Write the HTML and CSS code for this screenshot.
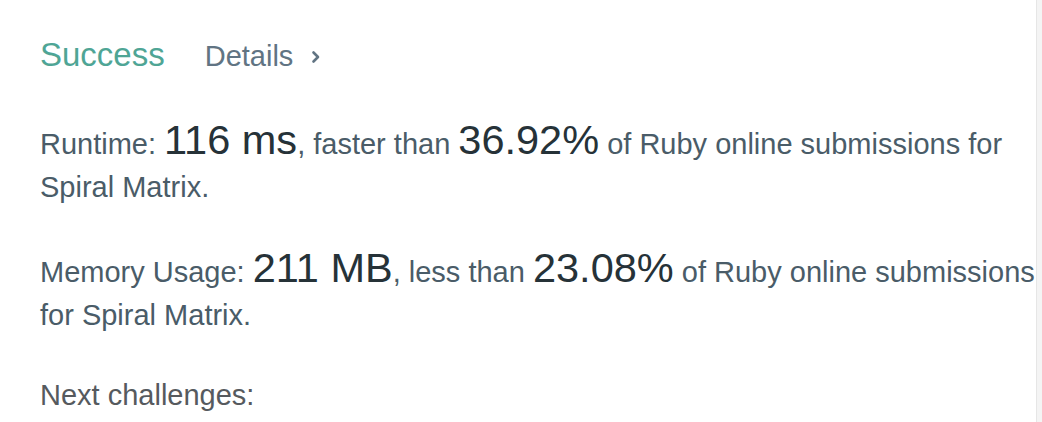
FILE: index.html
```html
<!DOCTYPE html>
<html lang="en">
<head>
<meta charset="utf-8">
<title>Submission Result</title>
<link rel="stylesheet" href="styles.css">
</head>
<body>
<div class="layout">
  <main class="panel">
    <div class="result-header">
      <span class="status">Success</span>
      <a class="details">Details
        <svg class="chevron" width="10" height="14" viewBox="0 0 10 14"><path d="M2.5 2.5 L7 7 L2.5 11.5" fill="none" stroke="currentColor" stroke-width="2.6" stroke-linecap="round" stroke-linejoin="round"/></svg>
      </a>
    </div>
    <p class="stat">Runtime: <span class="big">116 ms</span>, faster than <span class="big">36.92%</span> of Ruby online submissions for Spiral Matrix.</p>
    <p class="stat">Memory Usage: <span class="big">211 MB</span>, less than <span class="big">23.08%</span> of Ruby online submissions for Spiral Matrix.</p>
    <p class="next">Next challenges:</p>
  </main>
  <div class="splitter"></div>
</div>
</body>
</html>
```
FILE: styles.css
```css
html, body {
  margin: 0;
  padding: 0;
  background: #ffffff;
  height: 100%;
}
body {
  font-family: "Liberation Sans", Arial, sans-serif;
  overflow: hidden;
}
.layout {
  display: flex;
  height: 100%;
}
.panel {
  flex: 1;
  padding: 31px 0 0 40px;
  min-width: 0;
}
.splitter {
  width: 5px;
  background: #f4f4f4;
  border-left: 1px solid #e6e6e6;
}
.result-header {
  display: flex;
  align-items: baseline;
  line-height: 48px;
  margin-bottom: 37.5px;
}
.status {
  font-size: 33px;
  color: #4fa595;
}
.details {
  margin-left: 40px;
  font-size: 29px;
  color: #617483;
  display: flex;
  align-items: center;
  gap: 18px;
}
.chevron {
  display: block;
  position: relative;
  top: 1px;
}
.stat {
  margin: 0 0 37px 0;
  font-size: 29px;
  line-height: 43px;
  color: #4a5c68;
}
.big {
  font-size: 41.5px;
  color: #263238;
}
.next {
  margin: 0;
  font-size: 29px;
  line-height: 43px;
  color: #565a5e;
}
```
